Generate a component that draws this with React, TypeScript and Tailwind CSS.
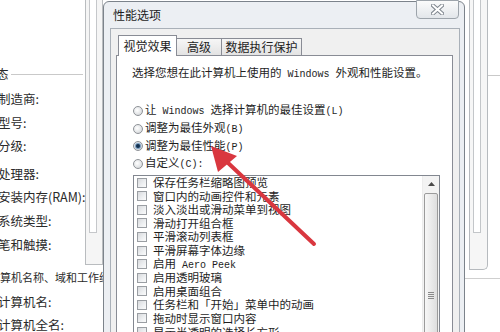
import React from "react";

function M({ children }: { children: React.ReactNode }) {
  return <span className="font-['Liberation_Mono',monospace] text-[10px]">{children}</span>;
}

function Radio({ checked = false }: { checked?: boolean }) {
  return (
    <span className="flex h-[10px] w-[10px] shrink-0 items-center justify-center rounded-full border border-[#8e9297] bg-[radial-gradient(circle_at_40%_40%,#ffffff_0%,#e4e6e8_55%,#c9cccf_100%)]">
      {checked && (
        <span className="h-[4px] w-[4px] rounded-full bg-[#12304e] shadow-[0_0_1px_1px_rgba(70,120,170,0.8)]" />
      )}
    </span>
  );
}

function Box() {
  return (
    <span className="h-[10px] w-[10px] shrink-0 border border-[#9a9ea3] bg-[linear-gradient(135deg,#d8dadd_0%,#eef0f2_60%,#fbfbfb_100%)]" />
  );
}

const items: React.ReactNode[] = [
  "保存任务栏缩略图预览",
  "窗口内的动画控件和元素",
  "淡入淡出或滑动菜单到视图",
  "滑动打开组合框",
  "平滑滚动列表框",
  "平滑屏幕字体边缘",
  <>
    启用<M> Aero Peek</M>
  </>,
  "启用透明玻璃",
  "启用桌面组合",
  "任务栏和「开始」菜单中的动画",
  "拖动时显示窗口内容",
  "显示半透明的选择长方形",
  "在窗口和按钮上使用视觉样式",
];

export default function App() {
  return (
    <div className="relative h-[332px] w-[500px] overflow-hidden bg-white font-['Noto_Sans_CJK_SC',sans-serif] text-[#1e1e1e]">
      {/* left background window */}
      <div className="absolute left-0 top-0 flex h-[332px] w-[103px]">
        <div className="flex w-[85px] shrink-0 flex-col pt-[66px] text-[12.5px] leading-[16px] text-[#2a2a2a]">
          <div className="flex h-[16px] items-center">
            <span className="-ml-[4px]">态</span>
            <span className="ml-[2px] mr-[2px] h-px flex-1 bg-[#c9c9c9]" />
          </div>
          <div className="-ml-[2px] mt-[9px] whitespace-nowrap">制造商:</div>
          <div className="-ml-[2px] mt-[8px] whitespace-nowrap">型号:</div>
          <div className="-ml-[2px] mt-[7px] whitespace-nowrap">分级:</div>
          <div className="-ml-[2px] mt-[12px] whitespace-nowrap">处理器:</div>
          <div className="-ml-[2px] mt-[7px] whitespace-nowrap">安装内存(RAM):</div>
          <div className="-ml-[2px] mt-[8px] whitespace-nowrap">系统类型:</div>
          <div className="-ml-[2px] mt-[8px] whitespace-nowrap">笔和触摸:</div>
          <div className="-ml-[11px] mt-[16px] whitespace-nowrap text-[11px]">计算机名称、域和工作组设置</div>
          <div className="-ml-[2px] mt-[9px] whitespace-nowrap">计算机名:</div>
          <div className="-ml-[2px] mt-[7px] whitespace-nowrap">计算机全名:</div>
        </div>
        <div className="-mt-[5px] h-[270px] w-[18px] shrink-0 border-x border-b border-[#b9bcbf] bg-[#f5f5f5]">
          <div className="ml-[3px] h-[238px] w-[8px] border-x border-b border-[#c5c7ca] bg-white" />
        </div>
      </div>

      {/* right background window */}
      <div className="absolute left-[465px] top-0 flex h-[332px] w-[35px] flex-col">
        <div className="flex h-[270px] shrink-0">
          <div className="-mt-[5px] ml-[4px] h-[275px] w-[19px] shrink-0 rounded-br-[5px] border-x border-b border-[#b6babe] bg-[#f6f6f6]">
            <div className="ml-[3px] h-[238px] w-[8px] border-x border-b border-[#c3c6c9] bg-white" />
          </div>
          <div className="flex-1 pt-[75px]">
            <div className="h-px bg-[#c9c9c9]" />
          </div>
        </div>
        <div className="mt-[8px] h-px bg-[#cfcfcf]" />
      </div>

      {/* dialog */}
      <div className="absolute left-[103px] top-[1px] flex h-[345px] w-[362px] flex-col rounded-t-[6px] border border-[#7c838b] bg-[#eceff3]">
        <div className="flex h-[26px] shrink-0 items-start justify-between pl-[9px] pr-[5px]">
          <span className="pt-[6px] text-[12px] leading-[14px] text-[#1c1c1c]">性能选项</span>
          <div className="-mt-[2px] flex h-[19px] w-[43px] items-center justify-center rounded-b-[4px] border border-[#9da4ab] bg-[linear-gradient(#fbfbfb,#e2e6ea)]">
            <svg width="13" height="11" viewBox="0 0 13 11">
              <path d="M2 1.5 L11 9.5 M11 1.5 L2 9.5" stroke="#7f868e" strokeWidth="4" strokeLinecap="square" />
              <path d="M2 1.5 L11 9.5 M11 1.5 L2 9.5" stroke="#ffffff" strokeWidth="2" strokeLinecap="square" />
            </svg>
          </div>
        </div>

        <div className="ml-[6px] mr-[4px] flex flex-1 flex-col border border-[#a9b0b8] bg-[#f0f0f0] pl-[5px] pr-[6px] pt-[6px]">
          {/* tabs */}
          <div className="relative z-10 -mb-px ml-[2px] flex h-[21px] items-end text-[12px] leading-[14px]">
            <div className="flex h-[21px] w-[59px] items-center justify-center border-x border-t border-[#898c95] bg-white">
              视觉效果
            </div>
            <div className="flex h-[18px] w-[45px] items-center justify-center border-y border-r border-[#898c95] bg-[linear-gradient(#f6f6f6,#e3e3e3)]">
              高级
            </div>
            <div className="flex h-[18px] w-[80px] items-center justify-center border-y border-r border-[#898c95] bg-[linear-gradient(#f6f6f6,#e3e3e3)]">
              数据执行保护
            </div>
          </div>

          {/* panel */}
          <div className="flex flex-1 flex-col border border-[#898c95] bg-white pl-[15px] pt-[9px] text-[11.5px] leading-[14px]">
            <div className="whitespace-nowrap">
              选择您想在此计算机上使用的<M> Windows </M>外观和性能设置。
            </div>

            <div className="mt-[20px] flex flex-col pl-px">
              <div className="flex h-[17.7px] items-center gap-[2px] whitespace-nowrap">
                <Radio />
                <span>
                  让<M> Windows </M>选择计算机的最佳设置<M>(L)</M>
                </span>
              </div>
              <div className="flex h-[17.7px] items-center gap-[2px] whitespace-nowrap">
                <Radio />
                <span>
                  调整为最佳外观<M>(B)</M>
                </span>
              </div>
              <div className="flex h-[17.7px] items-center gap-[2px] whitespace-nowrap">
                <Radio checked />
                <span>
                  调整为最佳性能<M>(P)</M>
                </span>
              </div>
              <div className="flex h-[17.7px] items-center gap-[2px] whitespace-nowrap">
                <Radio />
                <span>
                  自定义<M>(C):</M>
                </span>
              </div>
            </div>

            {/* list box */}
            <div className="ml-px mt-[2px] flex h-[240px] w-[307px] shrink-0 border border-[#828790] bg-white">
              <div className="flex flex-1 flex-col pl-[3px]">
                {items.map((it, i) => (
                  <div key={i} className="flex h-[13.6px] shrink-0 items-center gap-[6px] whitespace-nowrap leading-[13px]">
                    <Box />
                    <span>{it}</span>
                  </div>
                ))}
              </div>
              <div className="flex w-[17px] shrink-0 flex-col border-l border-[#ececec] bg-[#f3f3f3]">
                <div className="flex h-[17px] shrink-0 items-center justify-center">
                  <svg width="7" height="4" viewBox="0 0 7 4">
                    <path d="M0 4 L3.5 0 L7 4 Z" fill="#4a4a4a" />
                  </svg>
                </div>
                <div className="mx-px flex h-[206px] shrink-0 items-center justify-center rounded-[2px] border border-[#9b9b9b] bg-[linear-gradient(90deg,#f7f7f7,#dedede)]">
                  <div className="flex flex-col gap-[1px]">
                    <span className="h-px w-[6px] bg-[#8a8a8a]" />
                    <span className="h-px w-[6px] bg-[#8a8a8a]" />
                    <span className="h-px w-[6px] bg-[#8a8a8a]" />
                    <span className="h-px w-[6px] bg-[#8a8a8a]" />
                  </div>
                </div>
              </div>
            </div>
          </div>
        </div>
      </div>

      {/* red arrow */}
      <svg width="500" height="332" viewBox="0 0 500 332" className="pointer-events-none absolute left-0 top-0">
        <line x1="226" y1="161" x2="314" y2="244" stroke="#d9373f" strokeWidth="4" strokeLinecap="round" />
        <polygon points="211,146 218,172 237,156" fill="#d9373f" />
      </svg>
    </div>
  );
}
